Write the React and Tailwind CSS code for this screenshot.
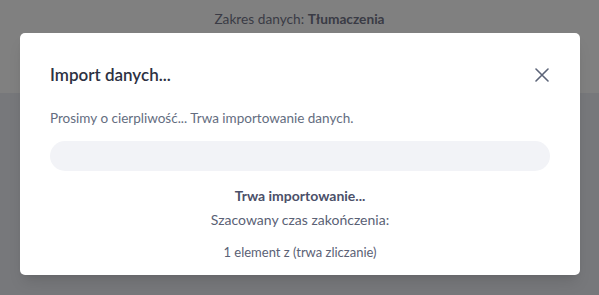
import React from "react";

export default function App() {
  return (
    <div className="relative w-[599px] h-[295px] overflow-hidden bg-[#77787b]" style={{ fontFamily: "Lato, 'Noto Sans', sans-serif" }}>
      <div className="h-[93px] bg-[#808080] flex justify-center pt-[9px]">
        <div className="text-[13.7px] leading-[20px] text-[#3a3b45]">
          Zakres danych: <span className="font-bold">Tłumaczenia</span>
        </div>
      </div>
      <div className="absolute left-[20px] top-[33px] w-[560px] h-[242px] bg-white rounded-[5px] shadow-lg px-[30px] pt-[30px]">
        <div className="flex items-center justify-between h-[24px]">
          <div className="text-[17px] leading-[24px] font-semibold text-[#2d3142]">Import danych...</div>
          <svg width="14" height="14" viewBox="0 0 14 14" className="mr-[1px]">
            <path d="M1 1L13 13M13 1L1 13" stroke="#5c6478" strokeWidth="1.6" strokeLinecap="round" />
          </svg>
        </div>
        <div className="mt-[21px] text-[13.5px] leading-[20px] text-[#646d80]">
          Prosimy o cierpliwość... Trwa importowanie danych.
        </div>
        <div className="mt-[13px] h-[30px] rounded-full bg-[#f2f3f7]" />
        <div className="mt-[15px] text-center text-[14px] leading-[20px] font-bold text-[#4b5069]">Trwa importowanie...</div>
        <div className="mt-[4px] text-center text-[14px] leading-[20px] text-[#5a6175]">Szacowany czas zakończenia:</div>
        <div className="mt-[12px] text-center text-[13px] leading-[20px] text-[#5a6175]">1 element z (trwa zliczanie)</div>
      </div>
    </div>
  );
}
